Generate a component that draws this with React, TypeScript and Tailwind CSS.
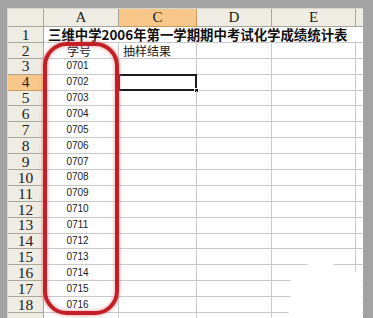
import React from 'react'

const ids = Array.from({ length: 16 }, (_, i) => '07' + String(i + 1).padStart(2, '0'))

const hdr = 'border-r border-b border-[#a9a69c] bg-[#eeece3]'
const cell = 'border-r border-b border-[#c9c9c9]'
const serif = { fontFamily: '"Liberation Serif", "DejaVu Serif", serif' }
const cjk = { fontFamily: '"Noto Sans CJK SC", "Liberation Sans", sans-serif' }

export default function App() {
  return (
    <div className="relative w-[373px] h-[318px] overflow-hidden bg-[#a3a3a3] pl-[7px] pt-[8px]">
      <div className="grid w-[356px] grid-cols-[36px_75px_78px_75px_84px_8px] grid-rows-[18px_repeat(18,15.9px)_6px] bg-white border-l border-t border-[#d8d6cc]">
        {/* column header row */}
        <div className={hdr} />
        {['A', 'C', 'D', 'E'].map(c => (
          <div
            key={c}
            className={
              'flex items-center justify-center text-[15px] leading-none text-[#222] ' +
              (c === 'C' ? 'border-r border-b border-[#c89a5c] bg-[#f8c78a]' : hdr)
            }
            style={serif}
          >
            {c}
          </div>
        ))}
        <div className={hdr} />

        {/* row 1 */}
        <RowHead n={1} />
        <div className="col-span-5 flex items-center border-b border-[#c9c9c9] pl-[4px]">
          <span className="whitespace-nowrap text-[13.4px] font-bold leading-[13px] text-[#111]" style={cjk}>
            三维中学2006年第一学期期中考试化学成绩统计表
          </span>
        </div>

        {/* row 2 */}
        <RowHead n={2} />
        <div className={cell + ' flex items-end justify-center pr-[4px] pb-[1px]'}>
          <span className="text-[12px] leading-[12px] text-[#222]" style={cjk}>学号</span>
        </div>
        <div className={cell + ' flex items-end pl-[4px] pb-[1px]'}>
          <span className="text-[12px] leading-[12px] text-[#222]" style={cjk}>抽样结果</span>
        </div>
        <div className={cell} />
        <div className={cell} />
        <div className="border-b border-[#c9c9c9]" />

        {ids.map((id, i) => {
          const row = i + 3
          return (
            <React.Fragment key={id}>
              <RowHead n={row} active={row === 4} />
              <div
                className={cell + ' flex items-center justify-center pr-[7px] text-[10px] leading-none text-[#1a1a1a]'}
                style={{ fontFamily: '"Liberation Sans", Arial, sans-serif' }}
              >
                {id}
              </div>
              <div className={cell + ' relative'}>
                {row === 4 && (
                  <>
                    <div className="absolute -left-[1px] -top-[1px] -right-[1px] -bottom-[1px] border-2 border-[#1c1c1c]" />
                    <div className="absolute -right-[3px] -bottom-[3px] h-[5px] w-[5px] bg-[#1c1c1c] border border-white" />
                  </>
                )}
              </div>
              <div className={cell} />
              <div className={cell} />
              <div className="border-b border-[#c9c9c9]" />
            </React.Fragment>
          )
        })}

        {/* partial row 19 */}
        <div className="border-r border-[#a9a69c] bg-[#eeece3]" />
        <div className="border-r border-[#c9c9c9]" />
        <div className="border-r border-[#c9c9c9]" />
        <div className="border-r border-[#c9c9c9]" />
        <div className="border-r border-[#c9c9c9]" />
        <div />
      </div>

      {/* red marker oval around column A */}
      <div className="absolute left-[43px] top-[42px] h-[273px] w-[76px] rounded-[24px] border-[4px] border-[#c41f26] shadow-[0_0_3px_1px_rgba(230,120,120,0.6),inset_0_0_3px_1px_rgba(230,120,120,0.5)]" />

      {/* white smudge bottom-right */}
      <svg className="absolute left-[285px] top-[245px]" width="88" height="73" viewBox="0 0 88 73">
        <path
          d="M6 40 C4 28 14 22 22 22 C24 10 34 4 40 8 C46 12 46 20 52 22 C62 22 70 26 74 30 L77 30 L77 73 L4 73 C2 60 8 50 6 40 Z"
          fill="#ffffff"
        />
      </svg>
    </div>
  )
}

function RowHead({ n, active }: { n: number; active?: boolean }) {
  return (
    <div
      className={
        'flex items-center justify-center text-[15.5px] leading-none text-[#222] ' +
        (active ? 'border-r border-b border-[#c89a5c] bg-[#f8c78a]' : hdr)
      }
      style={serif}
    >
      {n}
    </div>
  )
}
